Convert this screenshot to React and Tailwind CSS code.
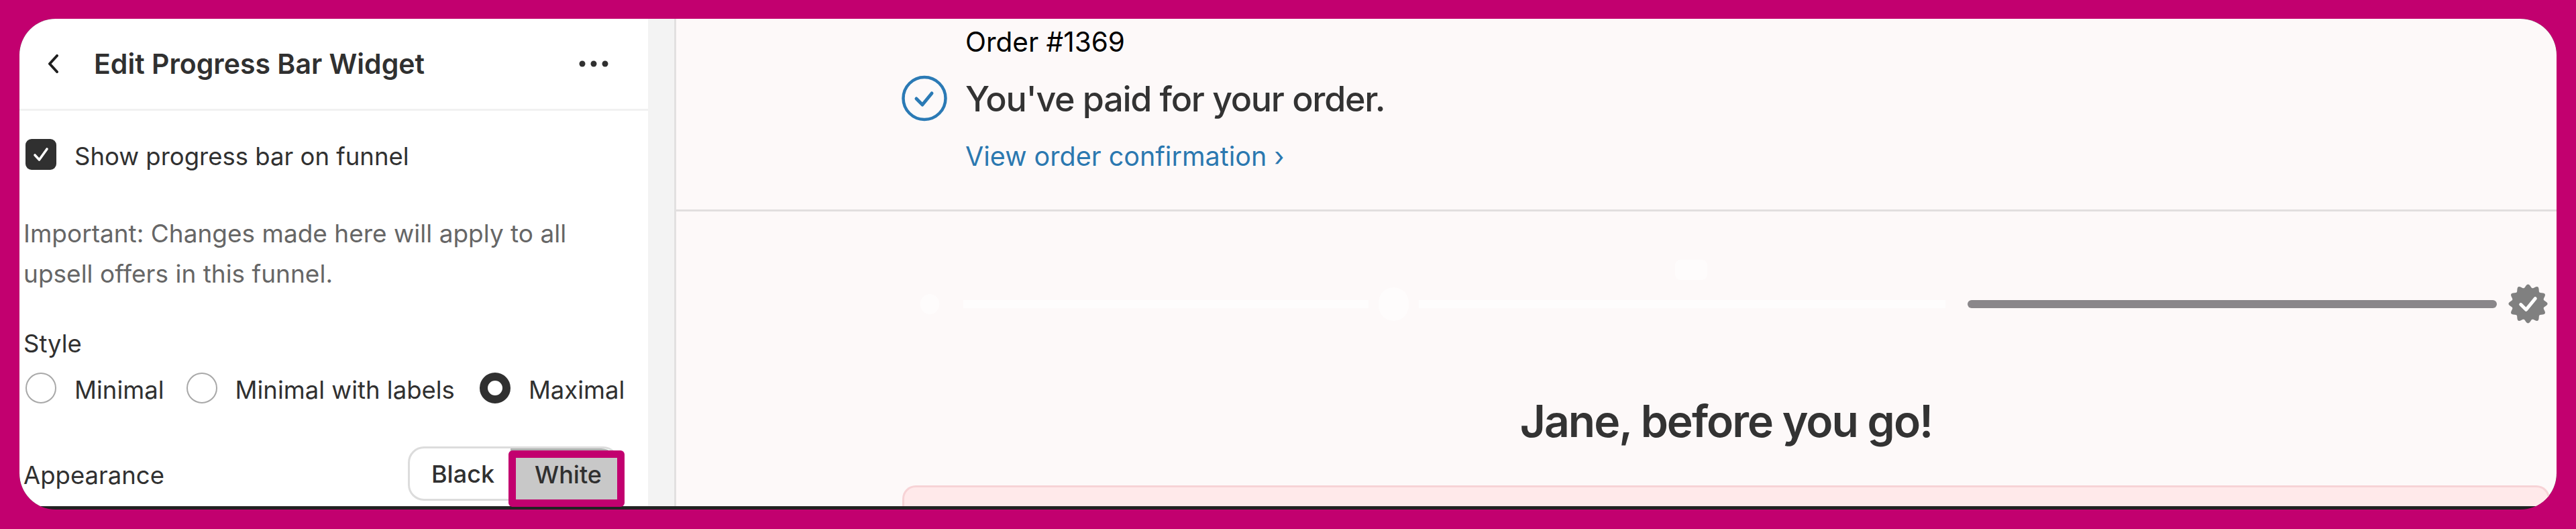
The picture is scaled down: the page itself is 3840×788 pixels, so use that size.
import React from 'react';

// scalloped badge outline, 12 bumps
function badgePath() {
	const pts = [];
	for (let i = 0; i < 120; i++) {
		const a = (i / 120) * Math.PI * 2;
		const r = 27 + 2.6 * Math.cos(a * 12);
		pts.push(`${(30 + r * Math.sin(a)).toFixed(2)},${(30 - r * Math.cos(a)).toFixed(2)}`);
	}
	return `M${pts.join('L')}Z`;
}

function Radio({ label, checked, className }) {
	return (
		<div className={`flex items-center gap-[27px] ${className || ''}`}>
			{checked ? (
				<div className="h-[46px] w-[46px] rounded-full border-[12px] border-[#303030] bg-white" />
			) : (
				<div className="h-[46px] w-[46px] rounded-full border-2 border-[#a8a8a8] bg-white" />
			)}
			<span className="pt-[6px] text-[36.5px] leading-[40px] text-[#303030]">{label}</span>
		</div>
	);
}

function Sidebar() {
	return (
		<aside className="flex h-full w-[937px] shrink-0 flex-col bg-white">
			<header className="flex h-[137px] shrink-0 items-center border-b-[3px] border-[#f1f1f1] pl-[42px] pr-[59px]">
				<svg width="16" height="28" viewBox="0 0 16 28" fill="none" className="shrink-0">
					<path d="M14 2 L3 14 L14 26" stroke="#1f1f1f" strokeWidth="4" strokeLinecap="round" strokeLinejoin="round" />
				</svg>
				<h1 className="ml-[53px] text-[41px] font-semibold leading-[50px] text-[#303030]">Edit Progress Bar Widget</h1>
				<svg width="44" height="10" viewBox="0 0 44 10" className="ml-auto shrink-0" fill="#303030">
					<circle cx="5" cy="5" r="4.5" />
					<circle cx="22" cy="5" r="4.5" />
					<circle cx="39" cy="5" r="4.5" />
				</svg>
			</header>

			<div className="pl-[9px]">
				<div className="mt-[42px] flex items-center gap-[27px]">
					<div className="flex h-[46px] w-[46px] items-center justify-center rounded-[9px] bg-[#303030]">
						<svg width="26" height="24" viewBox="0 0 26 24" fill="none">
							<path d="M4 13 L10.5 20 L22 4" stroke="#fff" strokeWidth="3.6" strokeLinecap="round" strokeLinejoin="round" />
						</svg>
					</div>
					<span className="pt-[6px] text-[36.5px] leading-[40px] text-[#303030]">Show progress bar on funnel</span>
				</div>

				<p className="-ml-[3px] mt-[65px] text-[37px] leading-[60px] text-[#666666]">
					Important: Changes made here will apply to all
					<br />
					upsell offers in this funnel.
				</p>

				<div className="-ml-[3px] mt-[49px] text-[36.5px] leading-[50px] text-[#303030]">Style</div>

				<div className="mt-[18px] flex items-center gap-[33px]">
					<Radio label="Minimal" />
					<Radio label="Minimal with labels" />
					<Radio label="Maximal" checked className="ml-[4px]" />
				</div>

				<div className="mt-[64px] flex items-center justify-between pr-[43px]">
					<span className="-ml-[3px] pt-[4px] text-[36.5px] leading-[46px] text-[#303030]">Appearance</span>
					<div className="relative flex h-[81px] w-[315px] rounded-[24px] border-[3px] border-[#dcdcdc] bg-white">
						<div className="flex w-[150px] items-center justify-center pl-[8px] text-[36px] font-medium text-[#303030]">Black</div>
						<div className="flex-1 rounded-tr-[24px] bg-[#b0b0b0]" />
						{/* highlight box drawn over the selected button */}
						<div className="absolute -right-[11px] top-[3px] flex h-[84px] w-[173px] items-center justify-center rounded-[6px] border-[11px] border-[#c2006f] bg-[#c8c8c8] pb-[12px] pl-[5px] text-[36px] font-medium text-[#303030]">
							White
						</div>
					</div>
				</div>
			</div>
		</aside>
	);
}

function Preview() {
	return (
		<section className="relative min-w-0 flex-1 overflow-hidden bg-[#fdf9f9]">
			<div className="pl-[336px]">
				<div className="mt-[10px] pl-[95px] text-[40.5px] leading-[50px] text-black">Order #1369</div>
				<div className="mt-[24px] flex items-center gap-[27px]">
					<svg width="68" height="69" viewBox="0 0 68 69" fill="none" className="shrink-0">
						<circle cx="34" cy="34.5" r="31.5" stroke="#2b7ab5" strokeWidth="4.5" />
						<path d="M22 35 L31 44 L45 27" stroke="#2b7ab5" strokeWidth="5" strokeLinecap="round" strokeLinejoin="round" />
					</svg>
					<span className="pt-[3px] text-[52px] font-medium leading-[66px] tracking-[-0.025em] text-[#333333]">You've paid for your order.</span>
				</div>
				<div className="mt-[27px] pl-[95px] text-[39.5px] leading-[50px] text-[#2b78b0]">View order confirmation ›</div>
			</div>

			<div className="mt-[54px] h-[3px] bg-[#e2dfdf]" />

			<div className="ml-[337px] mt-[108px] flex h-[59px] items-center">
				<div className="ml-[27px] h-[30px] w-[28px] rounded-full bg-white/50" />
				<div className="ml-[36px] h-[12px] w-[604px] bg-white/60" />
				<div className="ml-[15px] h-[50px] w-[45px] rounded-full bg-white/50" />
				<div className="ml-[15px] h-[12px] w-[785px] bg-white/60" />
				<div className="ml-[33px] h-[12px] w-[789px] rounded-full bg-[#8a878a]" />
				<svg width="59" height="59" viewBox="0 0 60 60" className="ml-[17px] shrink-0">
					<path d={badgePath()} fill="#808080" />
					<path d="M19 31 L27 39 L41 22" fill="none" stroke="#fff" strokeWidth="5" strokeLinecap="round" strokeLinejoin="round" />
				</svg>
			</div>

			{/* faint tooltip over the bar */}
			<div className="absolute left-[1489px] top-[359px] h-[30px] w-[48px] rounded-[8px] bg-white/50" />

			<h2 className="ml-[337px] mr-[10px] mt-[105px] text-center text-[66px] font-semibold leading-[80px] tracking-[-0.03em] text-[#333333]">Jane, before you go!</h2>

			<div className="ml-[337px] mr-[10px] mt-[56px] h-[60px] rounded-t-[20px] border-x-[3px] border-t-[3px] border-[#f7d3d6] bg-[#ffe9ea]" />
		</section>
	);
}

export default function App() {
	return (
		<div className="h-[788px] w-full overflow-hidden bg-[#c2006f] pb-[29px] pl-[29px] pr-[29px] pt-[28px] font-['Inter',sans-serif]">
			<div className="h-[731px] overflow-hidden rounded-[54px] bg-[#222222]">
				<div className="flex h-[726px]">
					<Sidebar />
					<div className="w-[39px] shrink-0 bg-[#f3f3f3]" />
					<div className="w-[3px] shrink-0 bg-[#e2e0e0]" />
					<Preview />
				</div>
			</div>
		</div>
	);
}
